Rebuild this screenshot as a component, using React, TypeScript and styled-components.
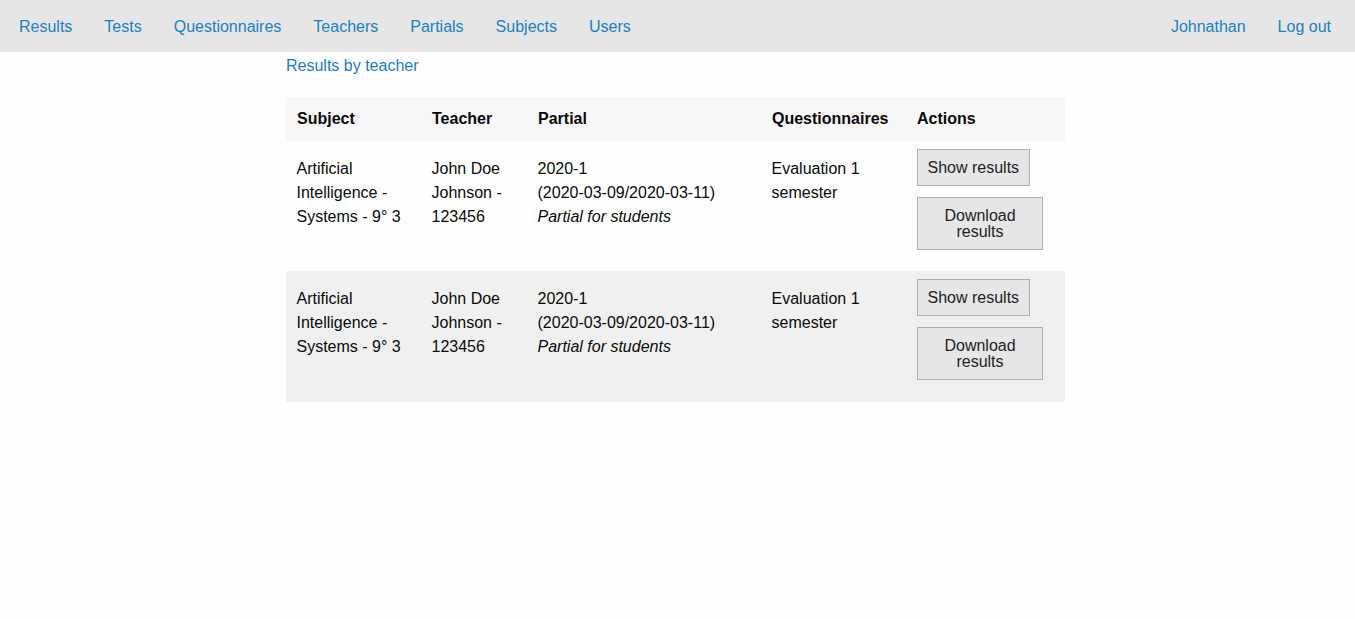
import React from "react";
import styled, { createGlobalStyle } from "styled-components";

const GlobalStyle = createGlobalStyle`
  html, body {
    margin: 0;
    padding: 0;
    background: #fefefe;
    font-family: "Liberation Sans", Arial, sans-serif;
    font-size: 16px;
    color: #0a0a0a;
  }
`;

const NavBar = styled.nav`
  display: flex;
  justify-content: space-between;
  align-items: center;
  height: 52px;
  background: #e6e6e6;
  padding: 0 8px 0 3px;
`;

const NavGroup = styled.div`
  display: flex;
  align-items: center;
  padding-top: 2px;
`;

const NavLink = styled.a`
  color: #1a7fc4;
  text-decoration: none;
  padding: 0 16px;
  line-height: 24px;
  cursor: pointer;
`;

const Main = styled.main`
  width: 783px;
  margin: 0 auto;
`;

const Breadcrumb = styled.a`
  display: block;
  width: fit-content;
  color: #1a7fc4;
  text-decoration: none;
  line-height: 24px;
  margin-top: 2px;
`;

const Table = styled.div`
  display: grid;
  grid-template-columns: 135px 106px 234px 145px 159px;
  width: 779px;
  margin-top: 19px;
`;

const Row = styled.div<{ $bg: string }>`
  display: contents;
  & > * {
    background: ${(p) => p.$bg};
  }
`;

const HeadCell = styled.div`
  font-weight: bold;
  line-height: 24px;
  padding: 10px 11px;
`;

const Cell = styled.div`
  line-height: 24px;
  padding: 16px 11px 15px 10.5px;
`;

const NoWrap = styled.span`
  white-space: nowrap;
`;

const ActionCell = styled.div<{ $bottom: number }>`
  display: flex;
  flex-direction: column;
  align-items: flex-start;
  gap: 11px;
  padding: 8px 22px ${(p) => p.$bottom}px 11px;
`;

const Button = styled.button`
  font-family: "Liberation Sans", Arial, sans-serif;
  font-size: 16px;
  line-height: 16px;
  color: #222;
  background: #e6e6e6;
  border: 1px solid #adadad;
  border-radius: 0;
  padding: 9.5px 9.5px;
  text-align: center;
  cursor: pointer;
`;

const rows = [
  { bg: "#fefefe", bottom: 21 },
  { bg: "#f0f0f0", bottom: 22 },
];

export default function App() {
  return (
    <>
      <GlobalStyle />
      <NavBar>
        <NavGroup>
          {["Results", "Tests", "Questionnaires", "Teachers", "Partials", "Subjects", "Users"].map((l) => (
            <NavLink key={l}>{l}</NavLink>
          ))}
        </NavGroup>
        <NavGroup>
          <NavLink>Johnathan</NavLink>
          <NavLink>Log out</NavLink>
        </NavGroup>
      </NavBar>
      <Main>
        <Breadcrumb>Results by teacher</Breadcrumb>
        <Table>
          <Row $bg="#f7f7f7">
            <HeadCell>Subject</HeadCell>
            <HeadCell>Teacher</HeadCell>
            <HeadCell>Partial</HeadCell>
            <HeadCell>Questionnaires</HeadCell>
            <HeadCell>Actions</HeadCell>
          </Row>
          {rows.map((r, i) => (
            <Row key={i} $bg={r.bg}>
              <Cell>Artificial Intelligence - Systems - 9° 3</Cell>
              <Cell>John Doe Johnson - 123456</Cell>
              <Cell>
                2020-1 <NoWrap>(2020-03-09/2020-03-11)</NoWrap>
                <br />
                <em>Partial for students</em>
              </Cell>
              <Cell>Evaluation 1 semester</Cell>
              <ActionCell $bottom={r.bottom}>
                <Button>Show results</Button>
                <Button>Download results</Button>
              </ActionCell>
            </Row>
          ))}
        </Table>
      </Main>
    </>
  );
}
